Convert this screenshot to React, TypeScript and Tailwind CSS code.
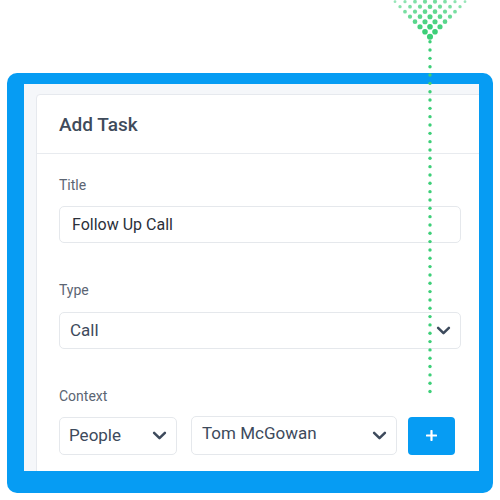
import React from 'react'

const font = { fontFamily: 'Roboto, "Liberation Sans", sans-serif' }

function Chevron({ className = '' }: { className?: string }) {
  return (
    <svg viewBox="0 0 16 10" className={`w-[15px] h-[9px] ${className}`} fill="none">
      <path d="M2 2 L8 8 L14 2" stroke="#3d4a5c" strokeWidth="2.8" strokeLinecap="round" strokeLinejoin="round" />
    </svg>
  )
}

function DotTrail() {
  const tri: { x: number; y: number; r: number; o: number }[] = []
  for (let row = 0; row < 8; row++) {
    const n = 8 - row
    const y = 1.7 + row * 5
    for (let i = 0; i < n; i++) {
      const x = 430 - (n - 1) * 5 + i * 10
      const d = Math.abs(x - 430) / 40
      tri.push({ x, y, r: 1.3 + row * 0.12 + (1 - d) * 0.9, o: 0.5 + (row / 8) * 0.4 + (1 - d) * 0.25 })
    }
  }
  const line: number[] = []
  for (let y = 41.7; y <= 392; y += 8.33) line.push(y)
  return (
    <svg className="absolute inset-0 pointer-events-none" width="500" height="500" viewBox="0 0 500 500">
      {tri.map((d, i) => <circle key={i} cx={d.x} cy={d.y} r={d.r} fill="#3dcf78" opacity={Math.min(d.o, 1)} />)}
      {line.map((y, i) => <circle key={'l' + i} cx={430} cy={y} r={1.7} fill="#3dcf78" />)}
    </svg>
  )
}

export default function App() {
  return (
    <div className="relative w-[500px] h-[500px] overflow-hidden bg-white" style={font}>
      <div className="ml-[7px] mt-[73px] w-[486px] h-[420px] rounded-[10px] bg-[#069cf3] pl-[17px] pt-[11px] pr-[14px] pb-[22px]">
        <div className="h-full overflow-hidden bg-[#f5f7fa] pl-[12px] pt-[10px]">
          <div className="w-[470px] h-[420px] bg-white border border-[#e6e9ee] rounded-tl-[4px]">
            <div className="h-[59px] flex items-center px-[22px] pt-[2px] border-b border-[#e8ebef]">
              <h1 className="text-[19px] font-medium text-[#3f4b5b]">Add Task</h1>
            </div>
            <div className="px-[22px] pt-[21px]">
              <p className="text-[14px] leading-[20px] text-[#5b6573]">Title</p>
              <div className="mt-[11px] w-[402px] h-[37px] rounded-[5px] border border-[#e5e8ec] flex items-center px-[12px] pt-[1px] text-[16px] text-[#2b303a]">Follow Up Call</div>

              <p className="mt-[37px] text-[14px] leading-[20px] text-[#5b6573]">Type</p>
              <div className="mt-[12px] w-[402px] h-[37px] rounded-[5px] border border-[#e5e8ec] flex items-center justify-between pl-[10px] pr-[9px] text-[17px] text-[#3d4a5c]">
                <span>Call</span>
                <Chevron />
              </div>

              <p className="mt-[37px] text-[14px] leading-[20px] text-[#5b6573]">Context</p>
              <div className="mt-[10px] flex items-center">
                <div className="w-[118px] h-[38px] rounded-[5px] border border-[#e5e8ec] flex items-center justify-between pl-[9px] pr-[9px] text-[17px] text-[#3d4a5c]">
                  <span className="pt-[1px]">People</span>
                  <Chevron />
                </div>
                <div className="ml-[14px] w-[206px] h-[39px] rounded-[5px] border border-[#e5e8ec] flex items-center justify-between pl-[10px] pr-[9px] text-[17px] text-[#3d4a5c]">
                  <span className="-mt-[3px]">Tom McGowan</span>
                  <Chevron className="-mt-[1px]" />
                </div>
                <button className="ml-[11px] w-[47px] h-[38px] rounded-[4px] bg-[#069cf3] flex items-center justify-center">
                  <svg viewBox="0 0 12 12" className="w-[11px] h-[11px]" fill="none">
                    <path d="M6 1 V11 M1 6 H11" stroke="white" strokeWidth="2.4" strokeLinecap="round" />
                  </svg>
                </button>
              </div>
            </div>
          </div>
        </div>
      </div>
      <DotTrail />
    </div>
  )
}
